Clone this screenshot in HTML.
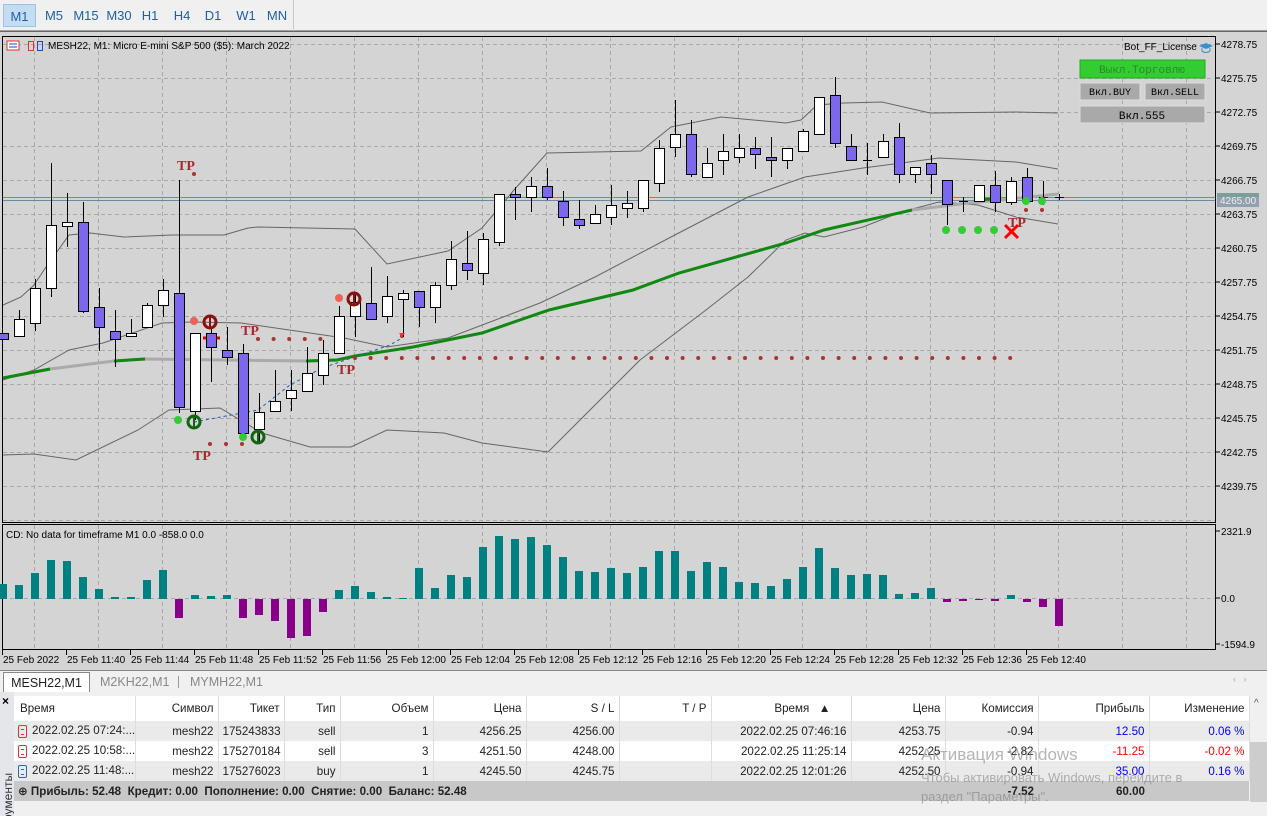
<!DOCTYPE html>
<html><head><meta charset="utf-8">
<style>
*{margin:0;padding:0;box-sizing:border-box}
body{width:1267px;height:816px;overflow:hidden;background:#f0f0f0;font-family:"Liberation Sans","DejaVu Sans",sans-serif;position:relative}
.tb{position:absolute;left:0;top:0;width:1267px;height:31px;background:#f0f0f0;border-bottom:1px solid #a0a0a0}
.tfp{position:absolute;left:0;top:0;width:294px;height:31px;border-right:1px solid #c8c8c8}
.tf{position:absolute;top:4px;height:23px;font-size:13px;color:#1e5fa8;line-height:23px;text-align:center}
#svg{position:absolute;left:0;top:31px}
.tabs{position:absolute;left:0;top:670px;width:1267px;height:22px;background:#f0f0f0;border-top:1px solid #888}
.tab{position:absolute;top:1px;height:20px;font-size:12.5px;line-height:20px;color:#888}
.side{position:absolute;left:0;top:692px;width:14px;height:124px;background:#e4e6ec;overflow:hidden}
table{position:absolute;left:14px;top:696px;border-collapse:collapse;font-size:11.6px;color:#222;table-layout:fixed;width:1235px}
td{height:20px;padding:0 4px;white-space:nowrap;overflow:hidden;border-right:1px solid #ddd;text-align:right}
tr.h td{height:25px;background:#fff}
tr.a td{background:#eaeaea}
tr.b td{background:#fff}
tr.s td{background:#c8c8c8;border-right:none;font-weight:bold;overflow:visible}
.ic{display:inline-block;width:9px;height:13px;border:1px solid #d33;border-radius:2px;vertical-align:middle;margin-right:5px;position:relative}
.ic:after{content:"";position:absolute;left:2px;top:3px;width:3px;height:4px;border-top:1px solid #d33;border-bottom:1px solid #d33}
.ic.bl{border-color:#1e6fb8}.ic.bl:after{border-color:#1e6fb8}
</style></head><body>
<div class="tb"><div class="tfp">
<div class="tf" style="left:3px;width:33px;background:#c5ddf2;border:1px solid #9cc3e6">M1</div>
<div class="tf" style="left:40px;width:28px">M5</div>
<div class="tf" style="left:71px;width:30px">M15</div>
<div class="tf" style="left:104px;width:30px">M30</div>
<div class="tf" style="left:138px;width:24px">H1</div>
<div class="tf" style="left:170px;width:24px">H4</div>
<div class="tf" style="left:201px;width:24px">D1</div>
<div class="tf" style="left:233px;width:26px">W1</div>
<div class="tf" style="left:264px;width:26px">MN</div>
</div></div>

<svg id="svg" width="1267" height="639" viewBox="0 31 1267 639" xmlns="http://www.w3.org/2000/svg" font-family="Liberation Sans, sans-serif">
<rect x="0" y="31" width="1267" height="639" fill="#d4d4d4"/>
<line x1="0" y1="31.5" x2="1267" y2="31.5" stroke="#666"/>
<g id="grid" stroke="#a8a8a8" stroke-dasharray="4,3"></g>
<g fill="none" stroke="#000">
<rect x="2.5" y="36.5" width="1213" height="486"/>
<rect x="2.5" y="524.5" width="1213" height="125"/>
</g>
<g id="plot"></g>
<g font-size="10" fill="#000" id="axis"></g>
<text x="48" y="49" font-size="10">MESH22, M1:  Micro E-mini S&amp;P 500 ($5): March 2022</text>
<rect x="7" y="41" width="12" height="9" fill="#fff" stroke="#d33"/><line x1="9" y1="44" x2="17" y2="44" stroke="#24c"/><line x1="9" y1="47" x2="17" y2="47" stroke="#24c"/>
<path d="M28.5 41.5h5v9h-5z" fill="none" stroke="#d33"/><path d="M37.5 41.5h5v9h-5z" fill="none" stroke="#24c"/>
<text x="6" y="538" font-size="10">CD: No data for timeframe M1 0.0 -858.0 0.0</text>
<text x="1124" y="50" font-size="10">Bot_FF_License</text>
<path d="M1199 46l7-3 7 3-7 3z" fill="#3a8fd0"/><path d="M1202 48v3c2 2 6 2 8 0v-3" fill="none" stroke="#3a8fd0"/>
<rect x="1080" y="60" width="125" height="18" fill="#33cc33" stroke="#2aa52a"/>
<text x="1142" y="73" font-size="11" fill="#2a8a2a" text-anchor="middle" font-family="Liberation Mono, monospace">Выкл.Торговлю</text>
<rect x="1080" y="83" width="60" height="17" fill="#a9a9a9" stroke="#ddd"/>
<text x="1110" y="95" font-size="10" text-anchor="middle" font-family="Liberation Mono, monospace">Вкл.BUY</text>
<rect x="1145" y="83" width="60" height="17" fill="#a9a9a9" stroke="#ddd"/>
<text x="1175" y="95" font-size="10" text-anchor="middle" font-family="Liberation Mono, monospace">Вкл.SELL</text>
<rect x="1080" y="106" width="125" height="17" fill="#a9a9a9" stroke="#ddd"/>
<text x="1142" y="119" font-size="11" text-anchor="middle" font-family="Liberation Mono, monospace">Вкл.555</text>
<rect x="1217" y="193" width="42" height="4" fill="#33cc33"/>
<rect x="1217" y="193" width="42" height="14" fill="#8797a8" opacity=".85"/>
<text x="1220" y="204" font-size="10" fill="#eee">4265.00</text>
</svg>

<div class="tabs">
<div class="tab" style="left:3px;width:87px;background:#fff;border:1px solid #888;border-bottom:none;color:#222;text-align:center">MESH22,M1</div>
<div class="tab" style="left:100px">M2KH22,M1</div>
<div style="position:absolute;left:178px;top:5px;width:1px;height:12px;background:#999"></div>
<div class="tab" style="left:190px">MYMH22,M1</div>
<div style="position:absolute;left:1233px;top:3px;font-size:9px;color:#aaa">‹ &nbsp; ›</div>
</div>
<div class="side"><div style="position:absolute;left:2px;top:2px;font-size:12px;font-weight:bold">×</div>
<div style="position:absolute;left:-22px;top:92px;transform:rotate(-90deg);font-size:12px;color:#333;width:60px">рументы</div></div>
<table>
<colgroup><col style="width:121px"><col style="width:83px"><col style="width:66px"><col style="width:56px"><col style="width:93px"><col style="width:93px"><col style="width:93px"><col style="width:92px"><col style="width:140px"><col style="width:94px"><col style="width:93px"><col style="width:111px"><col style="width:100px"></colgroup>
<tr class="h"><td style="text-align:left;padding-left:6px">Время</td><td>Символ</td><td>Тикет</td><td>Тип</td><td>Объем</td><td>Цена</td><td>S / L</td><td>T / P</td><td>Время &nbsp; ▲ &nbsp;&nbsp;&nbsp;&nbsp;</td><td>Цена</td><td>Комиссия</td><td>Прибыль</td><td>Изменение</td></tr>
<tr class="a"><td style="text-align:left;padding-left:4px"><span class="ic"></span>2022.02.25 07:24:...</td><td>mesh22</td><td>175243833</td><td>sell</td><td>1</td><td>4256.25</td><td>4256.00</td><td></td><td>2022.02.25 07:46:16</td><td>4253.75</td><td>-0.94</td><td style="color:#00f">12.50</td><td style="color:#00f">0.06 %</td></tr>
<tr class="b"><td style="text-align:left;padding-left:4px"><span class="ic"></span>2022.02.25 10:58:...</td><td>mesh22</td><td>175270184</td><td>sell</td><td>3</td><td>4251.50</td><td>4248.00</td><td></td><td>2022.02.25 11:25:14</td><td>4252.25</td><td>-2.82</td><td style="color:#f00">-11.25</td><td style="color:#f00">-0.02 %</td></tr>
<tr class="a"><td style="text-align:left;padding-left:4px"><span class="ic bl"></span>2022.02.25 11:48:...</td><td>mesh22</td><td>175276023</td><td>buy</td><td>1</td><td>4245.50</td><td>4245.75</td><td></td><td>2022.02.25 12:01:26</td><td>4252.50</td><td>-0.94</td><td style="color:#00f">35.00</td><td style="color:#00f">0.16 %</td></tr>
<tr class="s"><td colspan="10" style="text-align:left;padding-left:4px">⊕ Прибыль: 52.48 &nbsp;Кредит: 0.00 &nbsp;Пополнение: 0.00 &nbsp;Снятие: 0.00 &nbsp;Баланс: 52.48</td><td>-7.52</td><td>60.00</td><td></td></tr>
</table>
<div style="position:absolute;left:1250px;top:696px;width:17px;height:120px;background:#f0f0f0"><div style="position:absolute;left:0;top:46px;width:17px;height:60px;background:#cdcdcd"></div><div style="position:absolute;left:4px;top:2px;font-size:10px;color:#555">^</div></div>
<div style="position:absolute;left:921px;top:745px;font-size:17px;color:rgba(120,120,120,.55)">Активация Windows</div>
<div style="position:absolute;left:921px;top:768px;font-size:13px;line-height:19px;color:rgba(120,120,120,.55)">Чтобы активировать Windows, перейдите в<br>раздел "Параметры".</div>

<script>
var NS="http://www.w3.org/2000/svg";
function el(p,t,a){var e=document.createElementNS(NS,t);for(var k in a)e.setAttribute(k,a[k]);p.appendChild(e);return e}
var g=document.getElementById('grid'),P=document.getElementById('plot'),A=document.getElementById('axis');
for(var y=44;y<=520;y+=34)el(g,'line',{x1:3,y1:y+.5,x2:1215,y2:y+.5});
el(g,'line',{x1:3,y1:598.5,x2:1215,y2:598.5});
for(var x=34;x<1215;x+=64){el(g,'line',{x1:x+.5,y1:37,x2:x+.5,y2:522});el(g,'line',{x1:x+.5,y1:525,x2:x+.5,y2:649});}
var pr=[4278.75,4275.75,4272.75,4269.75,4266.75,4263.75,4260.75,4257.75,4254.75,4251.75,4248.75,4245.75,4242.75,4239.75];
pr.forEach(function(p,i){var y=44+i*34;el(A,'line',{x1:1216,y1:y,x2:1220,y2:y,stroke:'#000'});var t=el(A,'text',{x:1221,y:y+4});t.textContent=p.toFixed(2)});
[[2321.9,531],[0.0,598],[-1594.9,644]].forEach(function(a){el(A,'line',{x1:1216,y1:a[1],x2:1220,y2:a[1],stroke:'#000'});var t=el(A,'text',{x:1221,y:a[1]+4});t.textContent=a[0].toFixed(1)});
var tl=["25 Feb 2022","25 Feb 11:40","25 Feb 11:44","25 Feb 11:48","25 Feb 11:52","25 Feb 11:56","25 Feb 12:00","25 Feb 12:04","25 Feb 12:08","25 Feb 12:12","25 Feb 12:16","25 Feb 12:20","25 Feb 12:24","25 Feb 12:28","25 Feb 12:32","25 Feb 12:36","25 Feb 12:40"];
tl.forEach(function(s,i){var x=i==0?2:2+i*64;el(A,'line',{x1:x+.5,y1:650,x2:x+.5,y2:655,stroke:'#000'});var t=el(A,'text',{x:x+1,y:663});t.textContent=s});
el(P,'line',{x1:3,y1:197.5,x2:1215,y2:197.5,stroke:'#3cb83c'});
el(P,'line',{x1:3,y1:200.5,x2:1215,y2:200.5,stroke:'#6f86a6'});
function pl(pts,st,w,extra){var a={points:pts,fill:'none',stroke:st,'stroke-width':w};for(var k in extra)a[k]=extra[k];el(P,'polyline',a)}
pl("3,305 21,297 34,285 46,267 69,235 90,233 124,237 172,235 224,235 248,228 258,227 355,229 387,264 448,251 482,228 514,190 547,153 641,151 671,127 721,117 786,123 801,120 817,105 844,103 882,102 930,113 1016,112 1058,113","#666",1);
pl("3,380 34,370 69,350 103,343 162,323 193,322 241,323 310,333 344,338 387,347 448,338 540,303 595,277 671,237 748,197 805,177 863,168 939,158 1016,162 1058,169","#666",1);
pl("3,455 34,454 76,460 138,430 169,410 220,408 262,433 310,447 351,447 387,430 444,433 482,443 548,452 580,420 640,360 706,310 748,277 786,240 805,233 824,237 863,227 901,212 939,202 978,205 1016,217 1058,224","#666",1);
pl("3,378 50,369 114,361 145,359 306,361 337,360","#aaa",3);
pl("3,378 50,369","#118811",3);pl("114,361 145,359","#118811",3);pl("306,361 337,360","#118811",3);
pl("337,360 355,356 413,347 482,333 549,310 633,290 679,273 786,243 824,230 912,210","#118811",3);
pl("912,210 960,204 1000,200 1058,194","#aaa",3);
pl("977,200 993,199","#118811",3);
el(P,'line',{x1:203,y1:338,x2:220,y2:338,stroke:'#e00','stroke-width':3});
pl("194,422 258,410 290,385 322,368 390,345 402,338","#1a5fb4",1,{'stroke-dasharray':'3,3'});
for(var x=355;x<=1012;x+=15.6)el(P,'circle',{cx:x,cy:358,r:2,fill:'#a33'});
for(var x=258;x<=322;x+=15.6)el(P,'circle',{cx:x,cy:339,r:2,fill:'#a33'});
[[210,444],[226,444],[242,444],[194,174],[1026,210],[1042,210],[402,336]].forEach(function(d){el(P,'circle',{cx:d[0],cy:d[1],r:2,fill:'#a33'})});
var C=[[333,339,333,339,'b'],[319,336,310,336,'w'],[288,323,279,331,'w'],[225,288,163,297,'w'],[222,226,193,247,'w'],[222,311,202,313,'b'],[307,327,288,351,'b'],[331,339,310,367,'b'],[333,336,319,337,'w'],[305,327,303,327,'w'],[290,305,279,317,'w'],[293,407,180,413,'b'],[333,411,333,420,'w'],[333,347,328,382,'b'],[350,357,327,365,'b'],[353,433,344,433,'b'],[412,429,393,443,'w'],[401,411,370,411,'w'],[390,398,370,411,'w'],[373,391,347,391,'w'],[353,375,340,385,'w'],[316,353,306,353,'w'],[302,316,293,337,'w'],[303,319,267,319,'b'],[296,316,276,323,'w'],[293,299,290,337,'w'],[291,307,291,327,'b'],[285,307,282,323,'w'],[259,285,241,290,'w'],[263,270,231,280,'b'],[239,273,233,285,'w'],[194,242,194,246,'w'],[194,197,187,220,'b'],[186,197,177,212,'w'],[186,197,168,200,'b'],[201,217,191,226,'b'],[219,225,200,229,'b'],[214,223,205,223,'w'],[205,217,185,225,'w'],[203,208,191,218,'w'],[180,208,180,212,'w'],[148,183,140,192,'w'],[134,147,100,157,'w'],[134,174,120,177,'b'],[163,177,148,177,'w'],[151,160,134,175,'w'],[148,157,134,163,'w'],[148,154,137,169,'b'],[157,160,137,177,'b'],[148,160,148,169,'w'],[131,151,129,151,'w'],[97,134,97,134,'w'],[95,143,77,148,'b'],[146,160,134,160,'b'],[160,160,143,175,'d'],[141,157,134,157,'w'],[137,174,123,183,'b'],[167,174,167,183,'w'],[163,174,155,194,'b'],[180,204,180,225,'b'],[201,201,197,212,'d'],[185,201,185,201,'w'],[185,202,171,212,'b'],[181,202,177,205,'w'],[177,201,168,201,'b'],[197,197,181,205,'d'],[197,197,194,200,'d']];
C.forEach(function(c,k){var x=Math.round(2.6+16*k);
el(P,'line',{x1:x+.5,y1:c[2],x2:x+.5,y2:c[3],stroke:'#000'});
if(c[4]=='d'){el(P,'line',{x1:x-4,y1:c[0]+.5,x2:x+5,y2:c[0]+.5,stroke:'#000'});return}
var h=Math.max(c[1]-c[0],2);
el(P,'rect',{x:x-4.5,y:c[0]+.5,width:10,height:h,fill:c[4]=='w'?'#fff':'#7b68ee',stroke:'#000'});});
var H=[584,585,573,560,561,577,589,597,597,580,570,618,595,596,595,618,615,621,638,636,612,590,586,592,597,598,568,588,575,577,547,536,539,537,545,557,571,572,568,573,567,551,551,571,562,567,582,583,586,579,567,548,568,575,574,575,594,593,588,602,601,600,601,595,602,607,626];
H.forEach(function(y,k){var x=Math.round(2.6+16*k);var up=y<599;el(P,'rect',{x:x-4,y:up?y:599,width:8,height:Math.max(Math.abs(599-y),1),fill:up?'#008080':'#880088'})});
function tp(x,y){var t=el(P,'text',{x:x,y:y,'font-size':14,'font-weight':'bold',fill:'#a52a2a','font-family':'Liberation Serif, serif'});t.textContent='TP'}
tp(177,170);tp(193,460);tp(241,335);tp(337,374);tp(1008,227);
[[946,230],[962,230],[978,230],[994,230],[1026,201],[1042,201],[178,420],[243,437]].forEach(function(d){el(P,'circle',{cx:d[0],cy:d[1],r:4,fill:'#33cc33'})});
[[194,321],[339,298]].forEach(function(d){el(P,'circle',{cx:d[0],cy:d[1],r:4,fill:'#f0605a'})});
[[194,422,'#116611'],[258,437,'#116611'],[210,322,'#8b1010'],[354,299,'#8b1010']].forEach(function(d){el(P,'circle',{cx:d[0],cy:d[1],r:6,fill:'none',stroke:d[2],'stroke-width':3});el(P,'line',{x1:d[0],y1:d[1]-6,x2:d[0],y2:d[1]+6,stroke:d[2],'stroke-width':2})});
el(P,'path',{d:'M1005 225l13 13M1018 225l-13 13',stroke:'#f00','stroke-width':3});
el(P,'path',{d:'M399 333h6l-3 4z',fill:'#e33'});
</script>
</body></html>
